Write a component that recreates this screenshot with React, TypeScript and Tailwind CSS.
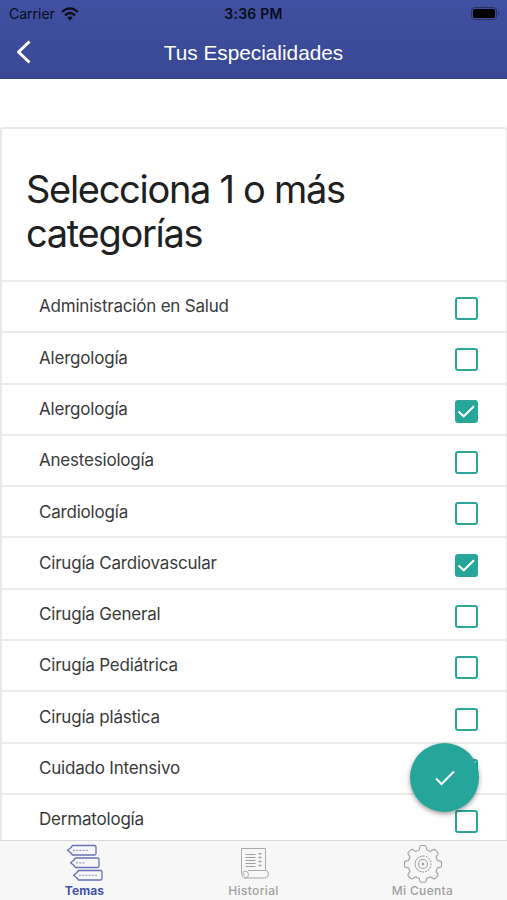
import { clsx } from 'clsx';

type Category = {
  name: string;
  checked?: boolean;
};

const CATEGORIES: Category[] = [
  { name: 'Administración en Salud' },
  { name: 'Alergología' },
  { name: 'Alergología', checked: true },
  { name: 'Anestesiología' },
  { name: 'Cardiología' },
  { name: 'Cirugía Cardiovascular', checked: true },
  { name: 'Cirugía General' },
  { name: 'Cirugía Pediátrica' },
  { name: 'Cirugía plástica' },
  { name: 'Cuidado Intensivo' },
  { name: 'Dermatología' },
];

const TABS = [
  { label: 'Temas', icon: TopicsIcon, active: true },
  { label: 'Historial', icon: HistoryIcon },
  { label: 'Mi Cuenta', icon: GearIcon },
];

function TopicsIcon() {
  return (
    <svg className="ml-[2px]" width="40" height="40" viewBox="0 0 40 40" fill="none" stroke="currentColor" strokeWidth="1.3" strokeLinejoin="round" opacity="0.8">
      <path d="M6.5 1.5H28.5Q30 1.5 30 3V9.5Q30 11 28.5 11H6.5L4.5 8.5L1.5 6.2L4.5 4Z" />
      <path d="M9.5 14H31.5Q33 14 33 15.5V22Q33 23.5 31.5 23.5H9.5L7.5 21L4.5 18.7L7.5 16.5Z" />
      <path d="M12.5 26.5H34.5Q36 26.5 36 28V34.5Q36 36 34.5 36H12.5L10.5 33.5L7.5 31.2L10.5 29Z" />
      <path d="M7 6.3H22M10 18.8H19M13 31.3H32" strokeWidth="1.3" strokeDasharray="2 1.2" opacity="0.65" />
    </svg>
  );
}

function HistoryIcon() {
  return (
    <svg className="ml-[3px]" width="40" height="40" viewBox="0 0 40 40" fill="none" stroke="currentColor" strokeWidth="0.9" strokeLinejoin="round">
      <path d="M6.5 27V4.5H30.5V26.5M6.5 27Q6.5 34 10 34Q13.5 34 13.5 30.5Q13.5 27 10 27Q8 27 8 29.5Q8 31.5 10 31.5M10 34H29.5Q33.5 34 33.5 30Q33.5 26.5 30.5 26.5H13" />
      <path d="M10.5 10.5H20.5M10.5 13.5H20.5M10.5 16.5H20.5M10.5 19.5H20.5M10.5 22.5H20.5" strokeWidth="1.1" />
      <path d="M23.5 9.7H26.5M23.5 13.5H26.5M23.5 17.5H26.5M23.5 21.5H26.5" strokeWidth="1.5" />
    </svg>
  );
}

function GearIcon() {
  return (
    <svg width="40" height="40" viewBox="0 0 40 40" fill="none" stroke="currentColor" strokeLinejoin="round">
      <path
        d="M18.5 1.5H21.5Q23 1.5 23.2 3L23.8 6Q25.5 6.5 27.3 7.6L30 5.7Q31.2 4.9 32.2 5.9L34.6 8.3Q35.5 9.3 34.7 10.5L33 13Q34 14.8 34.4 16.5L37.2 17.1Q38.5 17.4 38.5 18.8V21.7Q38.5 23 37.2 23.3L34.4 23.9Q34 25.7 33 27.4L34.7 29.9Q35.5 31.1 34.6 32L32.2 34.4Q31.2 35.3 30 34.5L27.3 32.7Q25.5 33.8 23.8 34.2L23.2 37Q23 38.3 21.5 38.3H18.5Q17 38.3 16.8 37L16.2 34.2Q14.5 33.8 12.7 32.7L10 34.5Q8.8 35.3 7.8 34.4L5.4 32Q4.5 31.1 5.3 29.9L7 27.4Q6 25.7 5.6 23.9L2.8 23.3Q1.5 23 1.5 21.7V18.8Q1.5 17.4 2.8 17.1L5.6 16.5Q6 14.8 7 13L5.3 10.5Q4.5 9.3 5.4 8.3L7.8 5.9Q8.8 4.9 10 5.7L12.7 7.6Q14.5 6.5 16.2 6L16.8 3Q17 1.5 18.5 1.5Z"
        strokeWidth="1.1"
      />
      <path d="M20 12A8 8 0 0 0 20 28" strokeWidth="0.9" />
      <path d="M20 12A8 8 0 0 1 20 28" strokeWidth="1.2" strokeDasharray="1.6 1.4" />
      <circle cx="20" cy="20" r="4.5" strokeWidth="1.1" />
      <circle cx="20" cy="20" r="1.3" fill="currentColor" stroke="none" />
    </svg>
  );
}

function StatusBar() {
  return (
    <div className="grid grid-cols-3 items-center h-[27px] px-[9px] text-[#0a0c18] text-[14px]">
      <div className="flex items-center gap-[6px]">
        Carrier
        <svg width="18" height="14" viewBox="0 0 18 14" fill="none" stroke="currentColor" strokeWidth="2.3">
          <path d="M1 5Q9 -2.3 17 5" />
          <path d="M4 8.3Q9 3.8 14 8.3" />
          <path d="M6.3 10.6Q9 8.5 11.7 10.6L9 13.5Z" fill="currentColor" stroke="none" />
        </svg>
      </div>
      <div className="text-center font-semibold tracking-[0.25px]">3:36 PM</div>
      <div className="flex justify-end items-center -mr-[2px]">
        <svg width="30" height="14" viewBox="0 0 30 14">
          <rect x="1.5" y="0.5" width="25" height="12" rx="3" fill="none" stroke="#27305f" />
          <rect x="3" y="2" width="22" height="9" rx="1.5" fill="#000" />
          <path d="M28 4.5Q30 6.5 28 8.5Z" fill="#27305f" />
        </svg>
      </div>
    </div>
  );
}

function Checkbox({ checked }: { checked?: boolean }) {
  return (
    <span
      className={clsx(
        'w-[23px] h-[23px] shrink-0 rounded-[3px] border-2 border-[#2ba698] grid place-items-center',
        checked && 'bg-[#26a69a]',
      )}
    >
      {checked && (
        <svg width="19" height="19" viewBox="0 0 19 19" fill="none" stroke="#fff" strokeWidth="2">
          <path d="M1.5 9.5L6.7 14.3L17 4.3" />
        </svg>
      )}
    </span>
  );
}

export default function App() {
  return (
    <div className="relative flex flex-col w-[507px] h-[900px] overflow-hidden bg-white font-['Inter','Liberation_Sans',sans-serif]">
      {/* Header */}
      <header className="h-[79px] shrink-0 bg-linear-to-b from-[#4050a0] to-[#394895] border-b border-[#33418a]">
        <StatusBar />
        <div className="grid grid-cols-[60px_1fr_60px] items-center h-[50px]">
          <svg className="ml-[15px]" width="18" height="26" viewBox="0 0 18 26" fill="none" stroke="#fff" strokeWidth="3">
            <path d="M14.5 2.5L3.5 13L14.5 23.5" strokeLinejoin="round" />
          </svg>
          <h1 className="pt-[2px] text-center text-white text-[20.8px] font-['Liberation_Sans',sans-serif]">
            Tus Especialidades
          </h1>
        </div>
      </header>

      {/* Category list */}
      <main className="flex-1 min-h-0 overflow-hidden pt-[48px]">
        <section className="border-t-2 border-l-2 border-r border-[#e8e8e8] rounded-t-[3px]">
          <h2 className="h-[151px] pt-[39px] pl-[24px] text-[38px] leading-[43.5px] tracking-[-1.3px] text-[#202020]">
            Selecciona 1 o más
            <br />
            categorías
          </h2>
          <ul>
            {CATEGORIES.map(({ name, checked }, i) => (
              <li
                key={i}
                className="flex items-center justify-between h-[51.3px] border-t-2 border-[#ececec] pl-[37px] pr-[28px] text-[17px] tracking-[-0.2px] text-[#3a3a3a]"
              >
                <span className="pt-px">{name}</span>
                <span className="pt-[4px]">
                  <Checkbox checked={checked} />
                </span>
              </li>
            ))}
          </ul>
        </section>
      </main>

      {/* Tab bar */}
      <nav className="h-[60px] shrink-0 grid grid-cols-3 bg-[#f7f7f7] border-t border-[#d8d8d8]">
        {TABS.map(({ label, icon: Icon, active }) => (
          <div
            key={label}
            className={clsx(
              'flex flex-col items-center pt-[3px]',
              active ? 'text-[#4552a4]' : 'text-[#a0a0a0]',
            )}
          >
            <Icon />
            <span className={clsx('text-[12px] leading-[14px]', active ? 'font-bold tracking-[0.1px]' : 'font-medium tracking-[0.35px]')}>
              {label}
            </span>
          </div>
        ))}
      </nav>

      {/* Confirm button */}
      <button className="absolute left-[410px] top-[743px] w-[69px] h-[69px] rounded-full bg-[#26a69a] grid place-items-center shadow-[0_2px_5px_rgba(0,0,0,0.4)]">
        <svg width="20" height="16" viewBox="0 0 20 16" fill="none" stroke="#fff" strokeWidth="2">
          <path d="M1 8.5L6.5 14L19 1.5" />
        </svg>
      </button>
    </div>
  );
}
